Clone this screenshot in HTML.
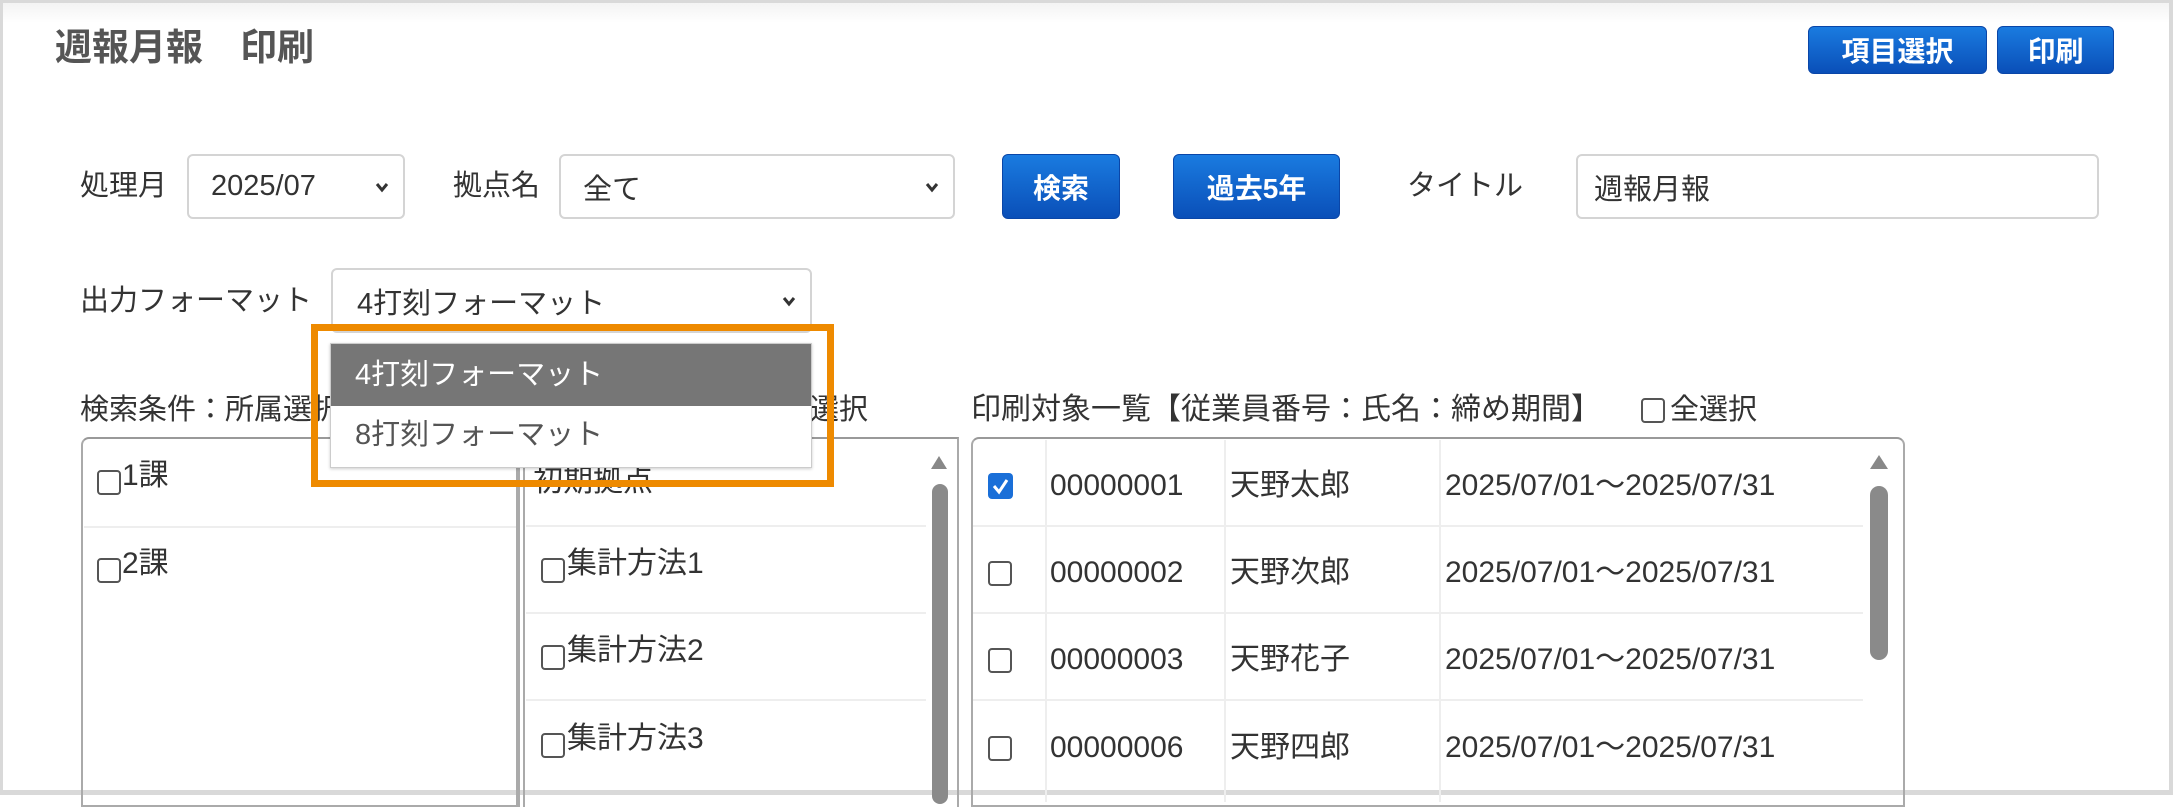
<!DOCTYPE html>
<html><head><meta charset="utf-8"><style>
*{box-sizing:border-box;margin:0;padding:0}
body{width:2182px;height:802px;overflow:hidden;background:#fff;font-family:"Liberation Sans","Noto Sans CJK JP",sans-serif;color:#333;position:relative}
.a{position:absolute}
.frame{left:0;top:0;width:2173px;height:795px;border:3px solid #d9d9d9;border-right-width:4px;border-bottom-width:5px}
.lbl{font-size:29px;line-height:34px;white-space:nowrap}
.sel{border:2px solid #d4d4d4;border-radius:6px;background:#fff;font-size:29px;padding-left:22px;display:flex;align-items:center}
.sel svg{position:absolute;right:14px;top:50%;margin-top:-6px}
.btn{background:linear-gradient(#1a7be0,#0a4fb8);border:1px solid #0a46a8;border-radius:6px;color:#fff;font-size:28px;font-weight:bold;display:flex;align-items:center;justify-content:center}
.cb{width:24px;height:25px;border:2px solid #555;border-radius:4px;background:#fff}
.cbc{width:25px;height:26px;border-radius:4px;background:#1a6fd8}
.hl{height:2px;background:#eee}
.vl{width:2px;background:#eee}
.t{font-size:30px;line-height:34px;white-space:nowrap}
</style></head><body>
<div class="a frame"></div>
<div class="a" style="left:3px;top:3px;width:2166px;height:20px;background:linear-gradient(#f3f3f3,#fff)"></div>
<div class="a" style="left:55px;top:17px;font-size:37px;font-weight:bold;color:#555;white-space:nowrap">週報月報　印刷</div>
<div class="a btn" style="left:1808px;top:26px;width:179px;height:48px">項目選択</div>
<div class="a btn" style="left:1997px;top:26px;width:117px;height:48px">印刷</div>

<div class="a lbl" style="left:80px;top:169px">処理月</div>
<div class="a sel" style="left:187px;top:154px;width:218px;height:65px">2025/07<svg width="14" height="12" viewBox="0 0 14 12"><path d="M2 3l5 6 5-6" stroke="#333" stroke-width="3" fill="none"/></svg></div>
<div class="a lbl" style="left:453px;top:169px">拠点名</div>
<div class="a sel" style="left:559px;top:154px;width:396px;height:65px">全て<svg width="14" height="12" viewBox="0 0 14 12"><path d="M2 3l5 6 5-6" stroke="#333" stroke-width="3" fill="none"/></svg></div>
<div class="a btn" style="left:1002px;top:154px;width:118px;height:65px">検索</div>
<div class="a btn" style="left:1173px;top:154px;width:167px;height:65px">過去5年</div>
<div class="a lbl" style="left:1407px;top:169px">タイトル</div>
<div class="a sel" style="left:1576px;top:154px;width:523px;height:65px;padding-left:16px">週報月報</div>

<div class="a lbl" style="left:80px;top:284px">出力フォーマット</div>
<div class="a sel" style="left:331px;top:268px;width:481px;height:65px;padding-left:24px">4打刻フォーマット<svg width="14" height="12" viewBox="0 0 14 12"><path d="M2 3l5 6 5-6" stroke="#333" stroke-width="3" fill="none"/></svg></div>

<div class="a lbl" style="left:80px;top:393px">検索条件：所属選択</div>
<div class="a lbl" style="left:810px;top:393px">選択</div>
<div class="a lbl" style="left:971px;top:393px;font-size:30px">印刷対象一覧【従業員番号：氏名：締め期間】</div>
<div class="a cb" style="left:1641px;top:398px"></div>
<div class="a lbl" style="left:1670px;top:393px">全選択</div>

<div class="a" style="left:81px;top:437px;width:437px;height:370px;border:2px solid #aaa;border-top-color:#999;border-radius:8px 0 0 0"></div>
<div class="a" style="left:516px;top:437px;width:4px;height:370px;background:#aaa"></div>
<div class="a hl" style="left:84px;top:526px;width:432px"></div>
<div class="a cb" style="left:97px;top:470px"></div><div class="a t" style="left:122px;top:459px">1課</div>
<div class="a cb" style="left:97px;top:558px"></div><div class="a t" style="left:122px;top:547px">2課</div>
<div class="a" style="left:522px;top:437px;width:437px;height:370px;border-top:2px solid #999;border-right:2px solid #aaa"></div>
<div class="a" style="left:523px;top:437px;width:2px;height:370px;background:#aaa"></div>
<div class="a t" style="left:533px;top:465px">初期拠点</div>
<div class="a hl" style="left:526px;top:525px;width:400px"></div>
<div class="a hl" style="left:526px;top:612px;width:400px"></div>
<div class="a hl" style="left:526px;top:699px;width:400px"></div>
<div class="a cb" style="left:541px;top:558px"></div><div class="a t" style="left:567px;top:547px">集計方法1</div>
<div class="a cb" style="left:541px;top:645px"></div><div class="a t" style="left:567px;top:634px">集計方法2</div>
<div class="a cb" style="left:541px;top:733px"></div><div class="a t" style="left:567px;top:722px">集計方法3</div>
<div class="a" style="left:931px;top:456px;width:0;height:0;border-left:8px solid transparent;border-right:8px solid transparent;border-bottom:13px solid #888"></div>
<div class="a" style="left:932px;top:484px;width:16px;height:320px;border-radius:8px;background:#8a8a8a"></div>

<div class="a" style="left:971px;top:437px;width:934px;height:370px;border:2px solid #aaa;border-top-color:#999;border-radius:8px 8px 0 0"></div>
<div class="a vl" style="left:1045px;top:440px;height:362px"></div>
<div class="a vl" style="left:1224px;top:440px;height:362px"></div>
<div class="a vl" style="left:1439px;top:440px;height:362px"></div>
<div class="a hl" style="left:973px;top:525px;width:890px"></div>
<div class="a hl" style="left:973px;top:612px;width:890px"></div>
<div class="a hl" style="left:973px;top:699px;width:890px"></div>
<div class="a cbc" style="left:988px;top:473px"><svg width="25" height="26" viewBox="0 0 25 26"><path d="M6 13l5 6 8-12" stroke="#fff" stroke-width="3" fill="none"/></svg></div>
<div class="a cb" style="left:988px;top:561px"></div>
<div class="a cb" style="left:988px;top:648px"></div>
<div class="a cb" style="left:988px;top:736px"></div>
<div class="a t" style="left:1050px;top:469px">00000001</div><div class="a t" style="left:1230px;top:469px">天野太郎</div><div class="a t" style="left:1445px;top:469px">2025/07/01～2025/07/31</div>
<div class="a t" style="left:1050px;top:556px">00000002</div><div class="a t" style="left:1230px;top:556px">天野次郎</div><div class="a t" style="left:1445px;top:556px">2025/07/01～2025/07/31</div>
<div class="a t" style="left:1050px;top:643px">00000003</div><div class="a t" style="left:1230px;top:643px">天野花子</div><div class="a t" style="left:1445px;top:643px">2025/07/01～2025/07/31</div>
<div class="a t" style="left:1050px;top:731px">00000006</div><div class="a t" style="left:1230px;top:731px">天野四郎</div><div class="a t" style="left:1445px;top:731px">2025/07/01～2025/07/31</div>
<div class="a" style="left:1870px;top:455px;width:0;height:0;border-left:9px solid transparent;border-right:9px solid transparent;border-bottom:14px solid #888"></div>
<div class="a" style="left:1870px;top:486px;width:18px;height:174px;border-radius:9px;background:#8a8a8a"></div>

<div class="a" style="left:330px;top:343px;width:482px;height:125px;background:#fff;border:1px solid #ccc;box-shadow:0 1px 3px rgba(0,0,0,.2)">
<div style="height:62px;background:#767676;color:#fff;font-size:29px;line-height:62px;padding-left:24px">4打刻フォーマット</div>
<div style="height:62px;color:#555;font-size:29px;line-height:58px;padding-left:24px">8打刻フォーマット</div>
</div>
<div class="a" style="left:311px;top:324px;width:523px;height:163px;border:7px solid #ee8a00"></div>
</body></html>
